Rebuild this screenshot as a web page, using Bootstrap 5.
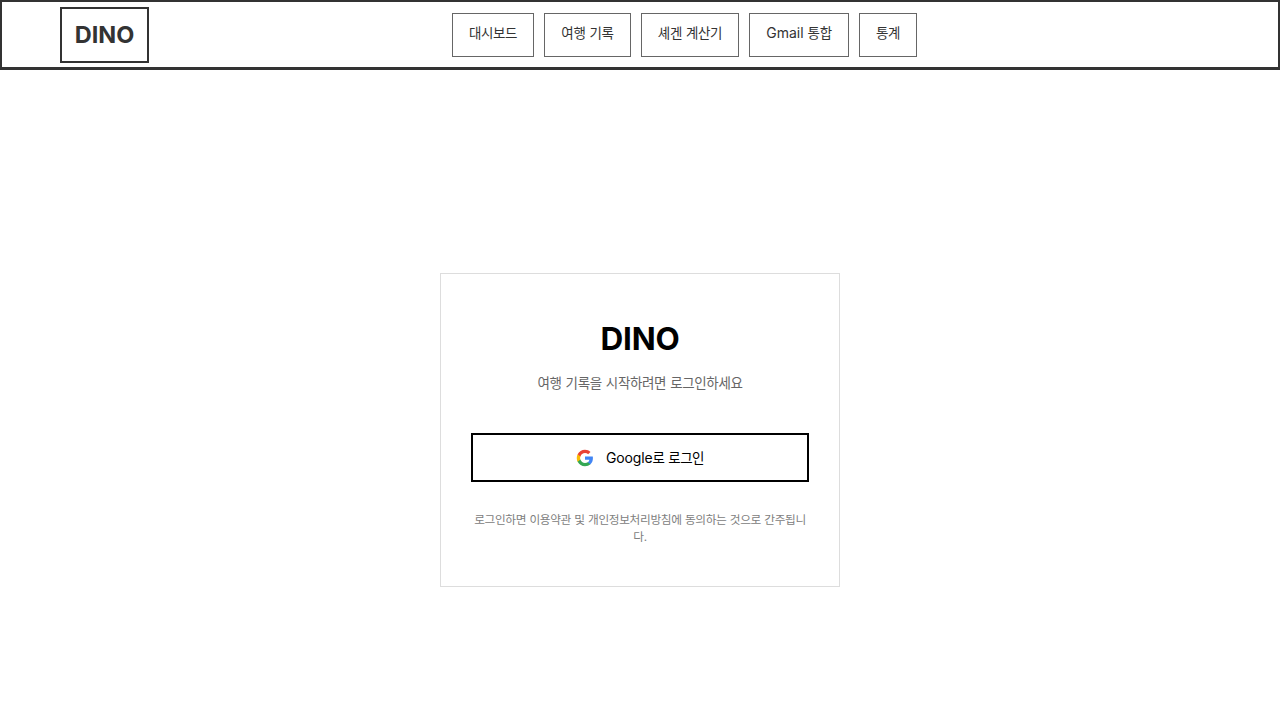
<!DOCTYPE html>
<html lang="ko">
<head>
<meta charset="utf-8">
<meta name="viewport" content="width=device-width, initial-scale=1">
<title>DINO</title>
<link href="https://cdn.jsdelivr.net/npm/bootstrap@5.3.0/dist/css/bootstrap.min.css" rel="stylesheet">
<style>
body{font-family:Inter,"Noto Sans CJK KR",sans-serif;font-size:14px;background:#fff;color:#000}
.site-header{height:70px;border:2px solid #333;border-bottom-width:3px;padding:0 58px}
.brand-box{width:89px;height:56px;border:2px solid #333;color:#333;font-size:23.5px;font-weight:700;letter-spacing:0;line-height:51px}
.menu{margin-left:303px;gap:10px}
.menu-item{height:44px;border:1px solid #666;color:#333;line-height:22px;padding-top:8px;white-space:nowrap}
.w1{width:82px}.w2{width:87px}.w3{width:98px}.w4{width:100px}.w5{width:58px}
.ko{font-size:13.5px;letter-spacing:-.36px;word-spacing:.6px}
.login-main{height:650px;padding-top:203px}
.login-box{width:400px;height:314px;border:1px solid #ddd;padding:41px 30px}
.login-title{font-size:31.5px;font-weight:700;letter-spacing:-.2px;line-height:48px}
.login-sub{color:#666;line-height:22px;margin-top:9px}
.google-btn{height:49px;border:2px solid #000;background:#fff;color:#000;margin-top:39px;gap:12px}
.google-text{letter-spacing:-.15px}
.google-text .ko{letter-spacing:-.5px}
.terms{font-size:11.7px;letter-spacing:-.36px;word-spacing:.4px;line-height:17px;color:#808080;margin-top:30px;word-break:break-all}
</style>
</head>
<body class="overflow-hidden">
<header class="site-header d-flex align-items-center">
  <a href="#" class="brand-box text-center text-decoration-none">DINO</a>
  <nav class="menu d-flex">
    <a href="#" class="menu-item w1 text-center text-decoration-none"><span class="ko">대시보드</span></a>
    <a href="#" class="menu-item w2 text-center text-decoration-none"><span class="ko">여행 기록</span></a>
    <a href="#" class="menu-item w3 text-center text-decoration-none"><span class="ko">셰겐 계산기</span></a>
    <a href="#" class="menu-item w4 text-center text-decoration-none">Gmail <span class="ko">통합</span></a>
    <a href="#" class="menu-item w5 text-center text-decoration-none"><span class="ko">통계</span></a>
  </nav>
</header>
<main class="login-main d-flex justify-content-center align-items-start">
  <section class="login-box text-center">
    <h1 class="login-title mb-0">DINO</h1>
    <p class="login-sub mb-0"><span class="ko">여행 기록을 시작하려면 로그인하세요</span></p>
    <button type="button" class="google-btn w-100 d-flex align-items-center justify-content-center">
      <svg width="18" height="18" viewBox="0 0 24 24" aria-hidden="true"><path fill="#4285F4" d="M22.56 12.25c0-.78-.07-1.53-.2-2.25H12v4.26h5.92c-.26 1.37-1.04 2.53-2.21 3.31v2.77h3.57c2.08-1.92 3.28-4.74 3.28-8.09z"/><path fill="#34A853" d="M12 23c2.97 0 5.46-.98 7.28-2.66l-3.57-2.77c-.98.66-2.23 1.06-3.71 1.06-2.86 0-5.29-1.93-6.16-4.53H2.18v2.84C3.99 20.53 7.7 23 12 23z"/><path fill="#FBBC05" d="M5.84 14.09c-.22-.66-.35-1.36-.35-2.09s.13-1.43.35-2.09V7.07H2.18C1.43 8.55 1 10.22 1 12s.43 3.45 1.18 4.93l3.66-2.84z"/><path fill="#EA4335" d="M12 5.38c1.62 0 3.06.56 4.21 1.64l3.15-3.15C17.45 2.09 14.97 1 12 1 7.7 1 3.99 3.47 2.18 7.07l3.66 2.84c.87-2.6 3.3-4.53 6.16-4.53z"/></svg>
      <span class="google-text">Google<span class="ko">로 로그인</span></span>
    </button>
    <p class="terms mb-0">로그인하면 이용약관 및 개인정보처리방침에 동의하는 것으로 간주됩니다.</p>
  </section>
</main>
<script src="https://cdn.jsdelivr.net/npm/bootstrap@5.3.0/dist/js/bootstrap.bundle.min.js"></script>
</body>
</html>
